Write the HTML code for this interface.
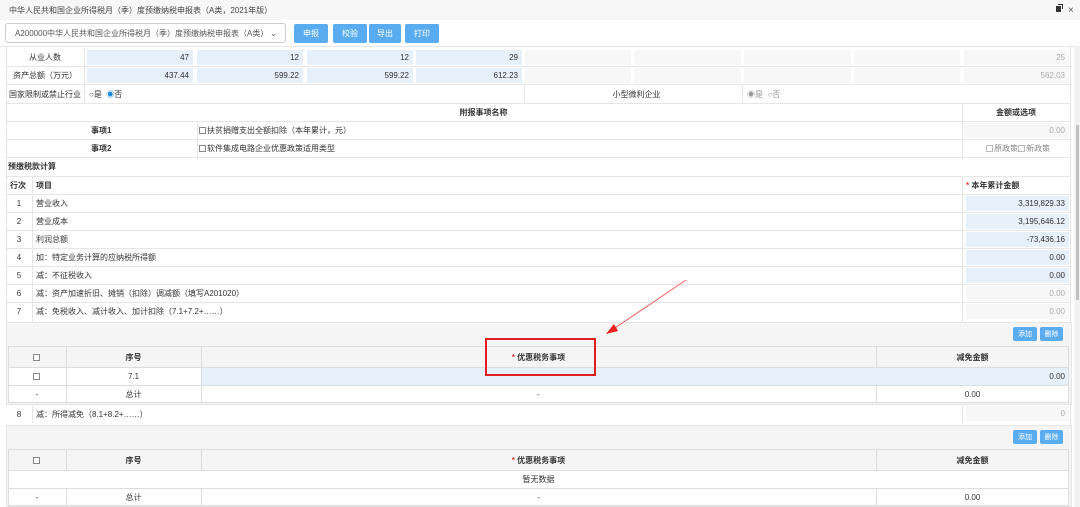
<!DOCTYPE html>
<html><head><meta charset="utf-8"><style>
*{margin:0;padding:0;box-sizing:border-box}
body{width:1080px;height:507px;overflow:hidden;background:#fff;font-family:"Liberation Sans","Noto Sans CJK SC",sans-serif;font-size:8px;color:#333;position:relative}
.a{position:absolute}
.c{position:absolute;display:flex;align-items:center}
.r{justify-content:flex-end;padding-right:4px}
.m{justify-content:center}
.bl{background:#e6f0fb}
.gy{background:#f7f7f7;color:#aaa}
.hl{position:absolute;height:1px;background:#e6e6e6}
.vl{position:absolute;width:1px;background:#e6e6e6}
.btn{position:absolute;background:#5aacf0;color:#fff;display:flex;align-items:center;justify-content:center;font-size:8px;border-radius:2px}
.b{font-weight:bold}
.cb{display:inline-block;width:7px;height:7px;border:1px solid #888;background:#fff;margin-right:1px;vertical-align:middle}
</style></head><body>
<div class="a" style="left:0;top:0;width:1080px;height:20px;background:#f7f7f7"></div>
<div class="c" style="left:9px;top:2px;height:16px;font-size:8px;color:#444">中华人民共和国企业所得税月（季）度预缴纳税申报表（A类，2021年版）</div>
<div class="a" style="left:1056px;top:6px;width:5px;height:6px;background:#333"></div>
<div class="a" style="left:1058px;top:4px;width:5px;height:5px;border-top:1px solid #333;border-right:1px solid #333"></div>
<div class="c" style="left:1068px;top:2px;height:16px;font-size:10px;color:#555">×</div>
<div class="c" style="left:5px;top:23px;width:281px;height:20px;border:1px solid #ccc;border-radius:3px;padding-left:9px;font-size:8px;color:#555">A200000中华人民共和国企业所得税月（季）度预缴纳税申报表（A类）<span style="position:absolute;right:8px;font-size:8px">⌄</span></div>
<div class="btn" style="left:294px;top:24px;width:34px;height:19px">申报</div>
<div class="btn" style="left:333px;top:24px;width:34px;height:19px">校验</div>
<div class="btn" style="left:369px;top:24px;width:32px;height:19px">导出</div>
<div class="btn" style="left:405px;top:24px;width:34px;height:19px">打印</div>
<div class="hl" style="left:0;top:46px;width:1075px"></div>
<div class="a" style="left:1074px;top:46px;width:6px;height:461px;background:#f1f1f1"></div>
<div class="a" style="left:1076px;top:125px;width:3px;height:175px;background:#c1c1c1"></div>
<div class="vl" style="left:6px;top:47px;height:276px"></div>
<div class="vl" style="left:1070px;top:47px;height:460px"></div>
<div class="c m" style="left:6px;top:48px;width:78px;height:18px">从业人数</div>
<div class="c m" style="left:6px;top:66px;width:78px;height:18px">资产总额（万元）</div>
<div class="vl" style="left:84px;top:48px;height:55px"></div>
<div class="c r bl" style="left:87px;top:50px;width:106px;height:15px">47</div>
<div class="c r bl" style="left:197px;top:50px;width:106px;height:15px">12</div>
<div class="c r bl" style="left:307px;top:50px;width:106px;height:15px">12</div>
<div class="c r bl" style="left:416px;top:50px;width:106px;height:15px">29</div>
<div class="c r bl" style="left:87px;top:68px;width:106px;height:15px">437.44</div>
<div class="c r bl" style="left:197px;top:68px;width:106px;height:15px">599.22</div>
<div class="c r bl" style="left:307px;top:68px;width:106px;height:15px">599.22</div>
<div class="c r bl" style="left:416px;top:68px;width:106px;height:15px">612.23</div>
<div class="c r gy" style="left:525px;top:50px;width:106px;height:15px"></div>
<div class="c r gy" style="left:634px;top:50px;width:107px;height:15px"></div>
<div class="c r gy" style="left:744px;top:50px;width:107px;height:15px"></div>
<div class="c r gy" style="left:854px;top:50px;width:106px;height:15px"></div>
<div class="c r gy" style="left:964px;top:50px;width:105px;height:15px">25</div>
<div class="c r gy" style="left:525px;top:68px;width:106px;height:15px"></div>
<div class="c r gy" style="left:634px;top:68px;width:107px;height:15px"></div>
<div class="c r gy" style="left:744px;top:68px;width:107px;height:15px"></div>
<div class="c r gy" style="left:854px;top:68px;width:106px;height:15px"></div>
<div class="c r gy" style="left:964px;top:68px;width:105px;height:15px">562.03</div>
<div class="hl" style="left:6px;top:66px;width:1064px"></div>
<div class="hl" style="left:6px;top:84px;width:1064px"></div>
<div class="c m" style="left:6px;top:85px;width:78px;height:18px">国家限制或禁止行业</div>
<div class="c" style="left:89px;top:85px;height:18px">○是 &nbsp;<span style="color:#1e88e5">◉</span>否</div>
<div class="vl" style="left:524px;top:84px;height:19px"></div>
<div class="c m" style="left:524px;top:85px;width:225px;height:18px">小型微利企业</div>
<div class="vl" style="left:742px;top:84px;height:19px"></div>
<div class="c" style="left:747px;top:85px;height:18px;color:#999">◉是 &nbsp;○否</div>
<div class="hl" style="left:6px;top:103px;width:1064px"></div>
<div class="c m b" style="left:6px;top:103px;width:955px;height:18px">附报事项名称</div>
<div class="vl" style="left:962px;top:103px;height:54px"></div>
<div class="c m b" style="left:962px;top:103px;width:108px;height:18px">金额或选项</div>
<div class="hl" style="left:6px;top:121px;width:1064px"></div>
<div class="c b" style="left:91px;top:121px;height:18px">事项1</div>
<div class="vl" style="left:197px;top:121px;height:36px"></div>
<div class="c" style="left:199px;top:121px;height:18px"><span class="cb"></span>扶贫捐赠支出全额扣除（本年累计，元）</div>
<div class="c r gy" style="left:964px;top:123px;width:105px;height:15px">0.00</div>
<div class="hl" style="left:6px;top:139px;width:1064px"></div>
<div class="c b" style="left:91px;top:139px;height:18px">事项2</div>
<div class="c" style="left:199px;top:139px;height:18px"><span class="cb"></span>软件集成电路企业优惠政策适用类型</div>
<div class="c" style="left:986px;top:139px;height:18px;color:#888"><span class="cb" style="border-color:#bbb"></span>原政策<span class="cb" style="border-color:#bbb"></span>新政策</div>
<div class="hl" style="left:6px;top:157px;width:1064px"></div>
<div class="c b" style="left:8px;top:157px;height:19px">预缴税款计算</div>
<div class="hl" style="left:6px;top:176px;width:1064px"></div>
<div class="c b" style="left:10px;top:176px;height:18px">行次</div>
<div class="c b" style="left:36px;top:176px;height:18px">项目</div>
<div class="vl" style="left:962px;top:176px;height:146px"></div>
<div class="vl" style="left:32px;top:176px;height:146px"></div>
<div class="c b" style="left:966px;top:176px;height:18px"><span style="color:#e33">*</span>&nbsp;本年累计金额</div>
<div class="hl" style="left:6px;top:194px;width:1064px"></div>
<div class="c m" style="left:6px;top:194px;width:26px;height:18px">1</div><div class="c" style="left:36px;top:194px;height:18px">营业收入</div><div class="c r bl" style="left:966px;top:196px;width:103px;height:15px">3,319,829.33</div>
<div class="hl" style="left:6px;top:212px;width:1064px"></div>
<div class="c m" style="left:6px;top:212px;width:26px;height:18px">2</div><div class="c" style="left:36px;top:212px;height:18px">营业成本</div><div class="c r bl" style="left:966px;top:214px;width:103px;height:15px">3,195,646.12</div>
<div class="hl" style="left:6px;top:230px;width:1064px"></div>
<div class="c m" style="left:6px;top:230px;width:26px;height:18px">3</div><div class="c" style="left:36px;top:230px;height:18px">利润总额</div><div class="c r bl" style="left:966px;top:232px;width:103px;height:15px">-73,436.16</div>
<div class="hl" style="left:6px;top:248px;width:1064px"></div>
<div class="c m" style="left:6px;top:248px;width:26px;height:18px">4</div><div class="c" style="left:36px;top:248px;height:18px">加：特定业务计算的应纳税所得额</div><div class="c r bl" style="left:966px;top:250px;width:103px;height:15px">0.00</div>
<div class="hl" style="left:6px;top:266px;width:1064px"></div>
<div class="c m" style="left:6px;top:266px;width:26px;height:18px">5</div><div class="c" style="left:36px;top:266px;height:18px">减：不征税收入</div><div class="c r bl" style="left:966px;top:268px;width:103px;height:15px">0.00</div>
<div class="hl" style="left:6px;top:284px;width:1064px"></div>
<div class="c m" style="left:6px;top:284px;width:26px;height:18px">6</div><div class="c" style="left:36px;top:284px;height:18px">减：资产加速折旧、摊销（扣除）调减额（填写A201020）</div><div class="c r gy" style="left:966px;top:286px;width:103px;height:15px">0.00</div>
<div class="hl" style="left:6px;top:302px;width:1064px"></div>
<div class="c m" style="left:6px;top:302px;width:26px;height:18px">7</div><div class="c" style="left:36px;top:302px;height:18px">减：免税收入、减计收入、加计扣除（7.1+7.2+……）</div><div class="c r gy" style="left:966px;top:304px;width:103px;height:15px">0.00</div>
<!-- panel 1 -->
<div class="a" style="left:6px;top:322px;width:1066px;height:83px;border:1px solid #e6e6e6;background:#f5f5f5"></div>
<div class="btn" style="left:1013px;top:327px;width:24px;height:14px;font-size:7px">添加</div>
<div class="btn" style="left:1040px;top:327px;width:23px;height:14px;font-size:7px">删除</div>
<div class="a" style="left:8px;top:346px;width:1061px;height:57px;border:1px solid #ddd;background:#fff"></div>
<div class="a" style="left:9px;top:347px;width:1059px;height:20px;background:#f5f5f5"></div>
<div class="hl" style="left:8px;top:367px;width:1061px;background:#ddd"></div>
<div class="hl" style="left:8px;top:385px;width:1061px;background:#ddd"></div>
<div class="vl" style="left:66px;top:346px;height:57px;background:#ddd"></div>
<div class="vl" style="left:201px;top:346px;height:57px;background:#ddd"></div>
<div class="vl" style="left:876px;top:346px;height:57px;background:#ddd"></div>
<div class="c m" style="left:8px;top:347px;width:58px;height:20px"><span class="cb"></span></div>
<div class="c m b" style="left:66px;top:347px;width:135px;height:20px">序号</div>
<div class="c m b" style="left:201px;top:347px;width:675px;height:20px"><span style="color:#e33">*</span>&nbsp;优惠税务事项</div>
<div class="c m b" style="left:876px;top:347px;width:193px;height:20px">减免金额</div>
<div class="c m" style="left:8px;top:367px;width:58px;height:18px"><span class="cb"></span></div>
<div class="c m" style="left:66px;top:367px;width:135px;height:18px">7.1</div>
<div class="a bl" style="left:202px;top:368px;width:866px;height:17px"></div>
<div class="c r" style="left:876px;top:367px;width:193px;height:18px">0.00</div>
<div class="c m" style="left:8px;top:385px;width:58px;height:18px">-</div>
<div class="c m" style="left:66px;top:385px;width:135px;height:18px">总计</div>
<div class="c m" style="left:201px;top:385px;width:675px;height:18px">-</div>
<div class="c m" style="left:876px;top:385px;width:193px;height:18px">0.00</div>
<!-- row 8 -->
<div class="c m" style="left:6px;top:405px;width:26px;height:18px">8</div>
<div class="vl" style="left:32px;top:405px;height:18px"></div>
<div class="c" style="left:36px;top:405px;height:18px">减：所得减免（8.1+8.2+……）</div>
<div class="vl" style="left:962px;top:405px;height:18px"></div>
<div class="c r gy" style="left:966px;top:406px;width:103px;height:15px">0</div>
<!-- panel 2 -->
<div class="a" style="left:6px;top:425px;width:1066px;height:82px;border:1px solid #e6e6e6;background:#f5f5f5"></div>
<div class="btn" style="left:1013px;top:430px;width:24px;height:14px;font-size:7px">添加</div>
<div class="btn" style="left:1040px;top:430px;width:23px;height:14px;font-size:7px">删除</div>
<div class="a" style="left:8px;top:449px;width:1061px;height:57px;border:1px solid #ddd;background:#fff"></div>
<div class="a" style="left:9px;top:450px;width:1059px;height:20px;background:#f5f5f5"></div>
<div class="hl" style="left:8px;top:470px;width:1061px;background:#ddd"></div>
<div class="hl" style="left:8px;top:488px;width:1061px;background:#ddd"></div>
<div class="vl" style="left:66px;top:449px;height:21px;background:#ddd"></div>
<div class="vl" style="left:201px;top:449px;height:21px;background:#ddd"></div>
<div class="vl" style="left:876px;top:449px;height:21px;background:#ddd"></div>
<div class="vl" style="left:66px;top:488px;height:18px;background:#ddd"></div>
<div class="vl" style="left:201px;top:488px;height:18px;background:#ddd"></div>
<div class="vl" style="left:876px;top:488px;height:18px;background:#ddd"></div>
<div class="c m" style="left:8px;top:450px;width:58px;height:20px"><span class="cb"></span></div>
<div class="c m b" style="left:66px;top:450px;width:135px;height:20px">序号</div>
<div class="c m b" style="left:201px;top:450px;width:675px;height:20px"><span style="color:#e33">*</span>&nbsp;优惠税务事项</div>
<div class="c m b" style="left:876px;top:450px;width:193px;height:20px">减免金额</div>
<div class="c m" style="left:8px;top:470px;width:1061px;height:18px">暂无数据</div>
<div class="c m" style="left:8px;top:488px;width:58px;height:18px">-</div>
<div class="c m" style="left:66px;top:488px;width:135px;height:18px">总计</div>
<div class="c m" style="left:201px;top:488px;width:675px;height:18px">-</div>
<div class="c m" style="left:876px;top:488px;width:193px;height:18px">0.00</div>
<!-- annotation -->
<div class="a" style="left:485px;top:338px;width:111px;height:38px;border:2px solid #e02020"></div>
<svg class="a" style="left:0;top:0" width="1080" height="507"><line x1="686" y1="280" x2="612" y2="330" stroke="#f06060" stroke-width="1"/><polygon points="606,334 614,324 618,331" fill="#e82020"/></svg>
</body></html>
